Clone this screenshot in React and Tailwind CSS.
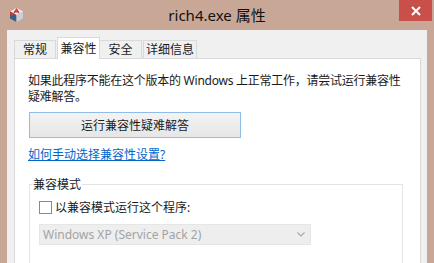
export default function App() {
  const font = "font-['Noto_Sans','Noto_Sans_CJK_SC',sans-serif]";
  return (
    <div className={`w-[434px] h-[263px] overflow-hidden bg-[#c9a797] flex flex-col ${font} text-[#1a1a1a]`}>
      {/* title bar */}
      <div className="h-[30px] shrink-0 grid grid-cols-[1fr_auto_1fr]">
        <div className="pl-[9px] pt-[7px]">
          <svg width="15" height="16" viewBox="0 0 15 16">
            <polygon points="7.5,1 14,4.5 7.5,8 1,4.5" fill="#f4f0ee" />
            <polygon points="1,4.5 7.5,8 7.5,15 1,11.5" fill="#3b5d86" />
            <polygon points="14,4.5 7.5,8 7.5,15 14,11.5" fill="#c9ced6" />
            <path d="M5 6 L7.5 2.2 L10 6 M6 4.8 L9 4.8" stroke="#d2382e" strokeWidth="1.4" fill="none" />
            <polygon points="1,4.5 4,6.1 4,9 1,7.4" fill="#d2382e" />
          </svg>
        </div>
        <div className="text-[15px] leading-[30px] text-[#111]">rich4.exe 属性</div>
        <div className="flex justify-end pr-[2px]">
          <div className="w-[33px] h-[21px] bg-[#c9504a] flex items-center justify-center">
            <svg width="10" height="10" viewBox="0 0 10 10">
              <path d="M1 1 L9 9 M9 1 L1 9" stroke="#fff" strokeWidth="2" />
            </svg>
          </div>
        </div>
      </div>

      {/* body */}
      <div className="flex-1 mx-[7px] bg-[#f0f0f0] flex flex-col pt-[7px]">
        <div className="flex items-end pl-[7px] h-[21px] text-[12px] leading-[15px]">
          <div className="w-[42px] h-[18px] border border-b-0 border-[#d9d9d9] bg-[#f0f0f0] flex items-center justify-center">常规</div>
          <div className="ml-[1px] w-[43px] h-[22px] -mb-px relative z-10 border border-b-0 border-[#d9d9d9] bg-white flex items-center justify-center pb-[1px]">兼容性</div>
          <div className="w-[42px] h-[18px] border border-b-0 border-l-0 border-[#d9d9d9] bg-[#f0f0f0] flex items-center justify-center">安全</div>
          <div className="ml-[1px] w-[54px] h-[18px] border border-b-0 border-[#d9d9d9] bg-[#f0f0f0] flex items-center justify-center">详细信息</div>
        </div>

        <div className="flex-1 ml-[7px] mr-[6px] bg-white border border-[#d9d9d9] pl-[13px] pt-[14px] text-[12px] leading-[15px]">
          <p className="leading-[16px] tracking-[-0.25px]">
            如果此程序不能在这个版本的 Windows 上正常工作，请尝试运行兼容性
            <br />
            疑难解答。
          </p>
          <div className="mt-[7px] ml-[1px] w-[212px] h-[26px] border border-[#8ebde9] bg-gradient-to-b from-[#f3f3f3] to-[#e6e6e6] flex items-center justify-center">
            运行兼容性疑难解答
          </div>
          <div className="mt-[9px]">
            <span className="text-[#0066cc] underline">如何手动选择兼容性设置?</span>
          </div>
          <fieldset className="mt-[15px] ml-[1px] w-[374px] h-[100px] border border-[#e3e3e3]">
            <legend className="ml-[2px] px-[1px]">兼容模式</legend>
            <div className="mt-[8px] pl-[9px] flex items-center gap-[3px]">
              <div className="w-[13px] h-[13px] border border-[#8a8a8a] bg-white" />
              <span>以兼容模式运行这个程序:</span>
            </div>
            <div className="mt-[9px] ml-[9px] w-[272px] h-[21px] bg-[#eeeeee] border border-[#e6e6e6] flex items-center justify-between pl-[3px] pr-[5px] text-[#a3a3a3]">
              <span className="text-[12px]">Windows XP (Service Pack 2)</span>
              <svg width="8" height="5" viewBox="0 0 8 5">
                <path d="M0.5 0.5 L4 4 L7.5 0.5" stroke="#a9a9a9" strokeWidth="1.2" fill="none" />
              </svg>
            </div>
          </fieldset>
        </div>
      </div>
    </div>
  );
}
